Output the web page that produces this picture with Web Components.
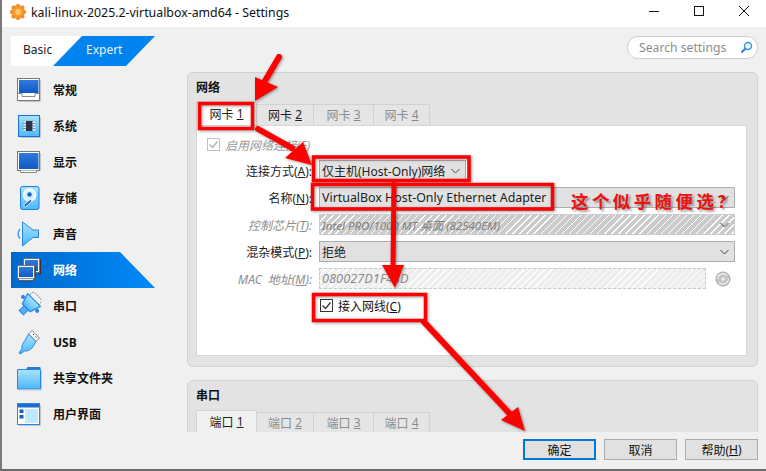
<!DOCTYPE html>
<html lang="zh">
<head>
<meta charset="utf-8">
<title>Settings</title>
<style>
    html, body { margin: 0; padding: 0; background: #f0f0f0; }
    body { font: 12px "Noto Sans", "Noto Sans CJK SC", sans-serif; color: #000; }
</style>
</head>
<body>
<vb-window>
    <vb-titlebar slot="title">kali-linux-2025.2-virtualbox-amd64 - Settings</vb-titlebar>
    <vb-sidebar slot="side">
        <vb-side-item icon="general">常规</vb-side-item>
        <vb-side-item icon="system">系统</vb-side-item>
        <vb-side-item icon="display">显示</vb-side-item>
        <vb-side-item icon="storage">存储</vb-side-item>
        <vb-side-item icon="audio">声音</vb-side-item>
        <vb-side-item icon="network" selected>网络</vb-side-item>
        <vb-side-item icon="serial">串口</vb-side-item>
        <vb-side-item icon="usb">USB</vb-side-item>
        <vb-side-item icon="folder">共享文件夹</vb-side-item>
        <vb-side-item icon="ui">用户界面</vb-side-item>
    </vb-sidebar>
    <vb-search slot="search">Search settings</vb-search>

    <vb-group title="网络">
        <vb-tabs>
            <vb-tab active>网卡 <u>1</u></vb-tab>
            <vb-tab>网卡 <u>2</u></vb-tab>
            <vb-tab disabled>网卡 <u>3</u></vb-tab>
            <vb-tab disabled>网卡 <u>4</u></vb-tab>
        </vb-tabs>
        <vb-pane>
            <vb-check disabled checked style="margin-left:10px">启用网络连接(E)</vb-check>
            <vb-row><span slot="label">连接方式(<u>A</u>):</span><vb-combo style="width:147px">仅主机(Host-Only)网络</vb-combo></vb-row>
            <vb-row><span slot="label">名称(<u>N</u>):</span><vb-combo style="width:416px;font-size:12.400px">VirtualBox Host-Only Ethernet Adapter</vb-combo></vb-row>
            <vb-row disabled><span slot="label">控制芯片(<u>T</u>):</span><vb-combo hatched style="width:416px;font-size:11.500px">Intel PRO/1000 MT 桌面 (82540EM)</vb-combo></vb-row>
            <vb-row><span slot="label">混杂模式(<u>P</u>):</span><vb-combo style="width:416px">拒绝</vb-combo></vb-row>
            <vb-row disabled><span slot="label" style="word-spacing:3px">MAC 地址(<u>M</u>):</span><vb-mac>080027D1F43D</vb-mac></vb-row>
            <vb-check checked style="margin-left:123px;height:21px">接入网线(<u>C</u>)</vb-check>
        </vb-pane>
    </vb-group>

    <vb-group title="串口" style="margin-top:13px">
        <vb-tabs>
            <vb-tab active soft>端口 <u>1</u></vb-tab>
            <vb-tab disabled>端口 <u>2</u></vb-tab>
            <vb-tab disabled>端口 <u>3</u></vb-tab>
            <vb-tab disabled>端口 <u>4</u></vb-tab>
        </vb-tabs>
    </vb-group>

    <vb-buttons slot="buttons">
        <vb-button default>确定</vb-button>
        <vb-button>取消</vb-button>
        <vb-button>帮助(<u>H</u>)</vb-button>
    </vb-buttons>

    <vb-annotations slot="overlay">这个似乎随便选？</vb-annotations>
</vb-window>

<script>
// one gradient set per svg, ids stay local to each shadow root
const DEFS = `<defs>
    <linearGradient id="sky" x1="0" y1="0" x2="0" y2="1"><stop offset="0" stop-color="#a8e4ff"/><stop offset="1" stop-color="#4cb8fb"/></linearGradient>
    <linearGradient id="deep" x1="0" y1="0" x2="0" y2="1"><stop offset="0" stop-color="#2f7ade"/><stop offset="1" stop-color="#0f5ac4"/></linearGradient>
</defs>`;

const ICONS = {
    general: `<rect x="3.500" y="2.500" width="22" height="22" fill="#fff" stroke="#777"/><rect x="5" y="4" width="19.500" height="13" fill="url(#deep)"/><path d="M4 17.500h4v3h13v-3h4" fill="none" stroke="#8a8a8a"/><path d="M26.500 4v21.500H5" fill="none" stroke="#c4c4c4"/>`,
    system: `<rect x="4.500" y="3.500" width="21" height="21" fill="url(#sky)" stroke="#1f6fd8"/><rect x="9" y="9" width="13" height="10" fill="#dff3ff" stroke="#6aa0d0" stroke-width=".6"/><rect x="12" y="9" width="6.500" height="10" fill="#2a3442"/><path d="M9 11.500h3M9 14h3M9 16.500h3M18.500 11.500h3M18.500 14h3M18.500 16.500h3" stroke="#3c78c0" stroke-width=".8"/><path d="M26.500 5v20.500H6" fill="none" stroke="#c4c4c4"/>`,
    display: `<rect x="3.500" y="3.500" width="22" height="19" fill="#fff" stroke="#777"/><rect x="5" y="5" width="19.500" height="16" fill="url(#deep)"/><path d="M6.500 22.500v2h16v-2" fill="#fff" stroke="#8a8a8a"/><path d="M26.500 5v18" stroke="#c4c4c4"/>`,
    storage: `<rect x="6.500" y="2.500" width="18.500" height="23" rx="2" fill="url(#sky)" stroke="#1f7be0"/><circle cx="15.500" cy="11" r="6" fill="#d8f1ff" stroke="#fff" stroke-width="1.500"/><circle cx="15.500" cy="10.500" r="2.200" fill="#1560c8"/><path d="M9.500 21l7-5.500 1.500 1.500-6.500 6z" fill="#1560c8" stroke="#fff" stroke-width=".8"/>`,
    audio: `<path d="M8.500 2L19 10h5.500v7.500H19L8.500 26z" fill="url(#sky)" stroke="#2a86e6" stroke-linejoin="round"/><path d="M6 9c-2.500 3-2.500 7 0 9.500" fill="none" stroke="#3f96ea" stroke-width="1.400"/>`,
    network: `<rect x="9.500" y="2.500" width="16" height="14" fill="#f4f4f4" stroke="#707070"/><rect x="11" y="4" width="13" height="11" fill="url(#deep)"/><path d="M26.500 4v14H24" fill="none" stroke="#333"/><rect x="3.500" y="9.500" width="17" height="13" fill="#f6f6f6" stroke="#707070"/><rect x="5" y="11" width="14" height="10" fill="url(#deep)"/><path d="M5 23.500h14" stroke="#eee" stroke-width="1.500"/><path d="M5 25h14M21.500 11v11" stroke="#444"/>`,
    serial: `<g transform="rotate(45 14 14)"><rect x="7.500" y="0" width="13" height="5.500" fill="#f6f6f6" stroke="#8a8a8a" stroke-dasharray="1.500 1"/><path d="M5 5.500h18l-3.500 11h-11z" fill="url(#sky)" stroke="#2a86e6" stroke-width="1.300"/><rect x="11" y="16.500" width="6" height="7" fill="#4cb0f5" stroke="#2a86e6"/><circle cx="4" cy="11" r="2" fill="#2a86e6"/><circle cx="24" cy="11" r="2" fill="#2a86e6"/></g>`,
    usb: `<path d="M18 2.500l7.500 7.500-3.500 3.500-7.500-7.500z" fill="#f6f6f6" stroke="#8a8a8a"/><path d="M14.500 6l7.500 7.500-3.500 6c-2 2.500-6 4-8 3.500l-4.500 3-1-1 3-4.500c-.5-2 1-6 3-8z" fill="url(#sky)" stroke="#2a86e6"/><path d="M19 6l1 1M21.500 8.500l1 1" stroke="#333"/>`,
    folder: `<path d="M12 5.500l1.500-2.500h12c.7 0 1 .3 1 1v3z" fill="#2a78d8"/><path d="M3.500 5.500h23v19.500h-23z" fill="url(#sky)" stroke="#2a86e6"/><path d="M27.500 7v19H5" fill="none" stroke="#c8c8c8"/>`,
    ui: `<rect x="3.500" y="3.500" width="22" height="21" fill="#fff" stroke="#2a86e6"/><rect x="4" y="4" width="21" height="3.500" fill="#1f6cd0"/><rect x="11" y="9" width="13" height="14" fill="#bfe9ff"/><rect x="5.500" y="9.500" width="4" height="3.500" fill="#1560c8"/><rect x="5.500" y="15" width="4" height="3.500" fill="#1560c8"/><path d="M26.500 5v20.500H5" fill="none" stroke="#c4c4c4"/>`
};

class VbWindow extends HTMLElement {
    constructor() {
        super();
        this.attachShadow({ mode: 'open' }).innerHTML = `
            <style>
                :host {
                    display: flex;
                    flex-direction: column;
                    position: relative;
                    width: 766px;
                    height: 471px;
                    box-sizing: border-box;
                    border-left: 2px solid #7a7a7a;
                    border-bottom: 2px solid #6a6a6a;
                    background: #f0f0f0;
                    overflow: hidden;
                }
                .main { display: flex; flex: 1; min-height: 0; padding-left: 9px; }
                .right { margin-left: 32px; width: 571px; padding-top: 9px; display: flex; flex-direction: column; }
                .search { display: flex; justify-content: flex-end; height: 23px; margin-bottom: 13px; }
                .scroll { height: 360px; overflow: hidden; }
            </style>
            <slot name="title"></slot>
            <div class="main">
                <slot name="side"></slot>
                <div class="right">
                    <div class="search"><slot name="search"></slot></div>
                    <div class="scroll"><slot></slot></div>
                    <slot name="buttons"></slot>
                </div>
            </div>
            <slot name="overlay"></slot>
        `;
    }
}

class VbTitlebar extends HTMLElement {
    constructor() {
        super();
        this.attachShadow({ mode: 'open' }).innerHTML = `
            <style>
                :host { display: flex; align-items: center; height: 27px; background: #fff; flex: none; font-size: 12.350px; color: #111; }
                .logo { margin-left: 8px; margin-right: 5px; margin-bottom: 3px; flex: none; }
                .text { flex: 1; white-space: nowrap; padding-bottom: 2px; }
                .ctl { width: 45px; height: 27px; display: flex; align-items: center; justify-content: center; flex: none; }
                .ctl svg { margin-bottom: 5px; }
            </style>
            <svg class="logo" width="16" height="16" viewBox="0 0 16 16">
                <g fill="#f58a1f" stroke="#d8691a" stroke-width=".5">
                    <circle cx="8" cy="2.200" r="2"/><circle cx="8" cy="13.800" r="2"/><circle cx="2.200" cy="8" r="2"/><circle cx="13.800" cy="8" r="2"/>
                    <circle cx="3.800" cy="3.800" r="2"/><circle cx="12.200" cy="3.800" r="2"/><circle cx="3.800" cy="12.200" r="2"/><circle cx="12.200" cy="12.200" r="2"/>
                </g>
                <circle cx="8" cy="8" r="6" fill="#f7982a"/>
                <circle cx="8" cy="8" r="3" fill="#fcc868"/>
            </svg>
            <span class="text"><slot></slot></span>
            <span class="ctl"><svg width="10" height="10" viewBox="0 0 10 10"><path d="M0 5.500h10" stroke="#111"/></svg></span>
            <span class="ctl"><svg width="10" height="10" viewBox="0 0 10 10"><rect x=".5" y=".5" width="9" height="9" fill="none" stroke="#111"/></svg></span>
            <span class="ctl"><svg width="10" height="10" viewBox="0 0 10 10"><path d="M0 0l10 10M10 0L0 10" stroke="#111"/></svg></span>
        `;
    }
}

class VbSidebar extends HTMLElement {
    constructor() {
        super();
        this.attachShadow({ mode: 'open' }).innerHTML = `
            <style>
                :host { display: block; width: 144px; flex: none; padding-top: 9px; }
                .mode { display: flex; height: 30px; margin-bottom: 6px; font-size: 12px; }
                .basic { width: 70px; background: #fff; padding-left: 12px; box-sizing: border-box; line-height: 28px; color: #222; }
                .expert {
                    width: 102px; margin-left: -28px; background: #0082ef; color: #e8f4ff;
                    clip-path: polygon(29px 0, 100% 0, 73px 100%, 0 100%);
                    padding-left: 33px; box-sizing: border-box; line-height: 28px;
                }
            </style>
            <div class="mode"><span class="basic">Basic</span><span class="expert">Expert</span></div>
            <slot></slot>
        `;
    }
}

class VbSideItem extends HTMLElement {
    constructor() {
        super();
        const icon = ICONS[this.getAttribute('icon')] || '';
        this.attachShadow({ mode: 'open' }).innerHTML = `
            <style>
                :host { display: flex; align-items: center; height: 36px; font-weight: 700; font-size: 12px; color: #111; padding-left: 3px; }
                :host([selected]) {
                    color: #fff;
                    background: linear-gradient(90deg, #0068cc, #008af8);
                    clip-path: polygon(0 0, 109px 0, 100% 100%, 0 100%);
                }
                svg { flex: none; margin-right: 11px; }
            </style>
            <svg width="28" height="28" viewBox="0 0 28 28">${DEFS}${icon}</svg>
            <slot></slot>
        `;
    }
}

class VbSearch extends HTMLElement {
    constructor() {
        super();
        this.attachShadow({ mode: 'open' }).innerHTML = `
            <style>
                :host {
                    display: flex; align-items: center; box-sizing: border-box; width: 131px; height: 23px;
                    background: #fff; border: 1px solid #cfcfcf; border-radius: 11px;
                    padding: 0 4px 1px 11px; color: #8d8d8d; font-size: 12.200px;
                }
                span { flex: 1; white-space: nowrap; }
            </style>
            <span><slot></slot></span>
            <svg width="13" height="13" viewBox="0 0 13 13"><circle cx="8" cy="5" r="3.500" fill="#eaf5ff" stroke="#3f95e8" stroke-width="1.500"/><path d="M5.500 7.500L1.500 11.500" stroke="#2f7fd8" stroke-width="2"/></svg>
        `;
    }
}

class VbGroup extends HTMLElement {
    constructor() {
        super();
        this.attachShadow({ mode: 'open' }).innerHTML = `
            <style>
                :host {
                    display: block; box-sizing: border-box; background: #e3e3e3;
                    border: 1px solid #d2d2d2; border-radius: 6px;
                    padding: 7px 10px 10px 8px;
                }
                .title { font-weight: 700; font-size: 12px; line-height: 16px; height: 17px; margin-bottom: 6px; color: #111; }
            </style>
            <div class="title">${this.getAttribute('title')}</div>
            <slot></slot>
        `;
    }
}

class VbTabs extends HTMLElement {
    constructor() {
        super();
        this.attachShadow({ mode: 'open' }).innerHTML = `
            <style>
                :host { display: flex; align-items: flex-end; height: 22px; }
            </style>
            <slot></slot>
        `;
    }
}

class VbTab extends HTMLElement {
    constructor() {
        super();
        this.attachShadow({ mode: 'open' }).innerHTML = `
            <style>
                :host {
                    display: flex; align-items: center; justify-content: center; box-sizing: border-box;
                    height: 21px; width: 57px; border: 1px solid #d2d2d2; border-bottom: 0; border-left: 0;
                    font-size: 12px; color: #222; background: #e5e5e5; white-space: pre; padding-bottom: 1px;
                }
                :host(:nth-child(n+3)) { width: 59px; }
                :host(:nth-child(3)) { width: 60px; }
                :host(:nth-child(4)) { width: 56px; }
                :host([active]) { height: 23px; width: 61px; background: #fff; border-left: 1px solid #d2d2d2; }
                :host([soft]) { background: #f0f0f0; }
                :host([disabled]) { color: #8c8c8c; }
            </style>
            <slot></slot>
        `;
    }
}

class VbPane extends HTMLElement {
    constructor() {
        super();
        this.attachShadow({ mode: 'open' }).innerHTML = `
            <style>
                :host {
                    display: flex; flex-direction: column; gap: 6px; box-sizing: border-box;
                    height: 231px; padding: 9px 10px 0 0; background: #fff; border: 1px solid #d6d6d6;
                }
            </style>
            <slot></slot>
        `;
    }
}

class VbRow extends HTMLElement {
    constructor() {
        super();
        this.attachShadow({ mode: 'open' }).innerHTML = `
            <style>
                :host { display: grid; grid-template-columns: 115px 1fr; column-gap: 7px; height: 21px; align-items: center; color: #222; font-size: 12px; }
                :host([disabled]) { color: #8c8c8c; font-style: italic; }
                .label { text-align: right; white-space: nowrap; }
                .field { display: flex; align-items: center; gap: 9px; }
            </style>
            <div class="label"><slot name="label"></slot></div>
            <div class="field"><slot></slot></div>
        `;
    }
}

class VbCombo extends HTMLElement {
    constructor() {
        super();
        this.attachShadow({ mode: 'open' }).innerHTML = `
            <style>
                :host {
                    display: flex; align-items: center; justify-content: space-between; box-sizing: border-box;
                    height: 21px; background: #e1e1e1; border: 1px solid #adadad; padding: 0 5px 0 2px;
                    white-space: nowrap; color: #222; font-size: 12px;
                }
                :host([hatched]) {
                    color: #808080; border-color: #cdcdcd;
                    background: repeating-linear-gradient(135deg, #cbcbcb 0 4px, #fff 4px 5px);
                }
                svg { flex: none; }
            </style>
            <span><slot></slot></span>
            <svg width="9" height="6" viewBox="0 0 9 6"><path d="M.5 1l4 4 4-4" fill="none" stroke="#444"/></svg>
        `;
    }
}

class VbMac extends HTMLElement {
    constructor() {
        super();
        this.attachShadow({ mode: 'open' }).innerHTML = `
            <style>
                :host { display: flex; align-items: center; gap: 9px; color: #8c8c8c; font-size: 12.800px; }
                .box {
                    box-sizing: border-box; width: 387px; height: 21px; padding: 0 2px; line-height: 18px;
                    border: 1px dashed #c8c8c8;
                    background: repeating-linear-gradient(135deg, #eeeeee 0 4px, #fff 4px 5px);
                }
            </style>
            <div class="box"><slot></slot></div>
            <svg width="16" height="16" viewBox="0 0 16 16">
                <circle cx="8" cy="8" r="7" fill="#c4c4c4" stroke="#a4a4a4"/>
                <path d="M2.500 8a5.500 5.500 0 0 1 9.500-3.500M13.500 8a5.500 5.500 0 0 1-9.500 3.500" fill="none" stroke="#eee" stroke-width="1.300"/>
                <circle cx="8" cy="8" r="1.800" fill="#eee"/>
            </svg>
        `;
    }
}

class VbCheck extends HTMLElement {
    constructor() {
        super();
        this.attachShadow({ mode: 'open' }).innerHTML = `
            <style>
                :host { display: flex; align-items: center; gap: 5px; height: 19px; color: #111; font-size: 12px; }
                :host([disabled]) { color: #9a9a9a; font-style: italic; }
                svg { flex: none; }
            </style>
            <svg width="13" height="13" viewBox="0 0 13 13">
                <rect x=".5" y=".5" width="12" height="12" fill="#fff" stroke="#333"/>
                <path d="M2.500 6.500l3 3 5-6" fill="none" stroke="#333" stroke-width="1.300"/>
            </svg>
            <span><slot></slot></span>
        `;
        if (this.hasAttribute('disabled')) {
            const svg = this.shadowRoot.querySelector('svg');
            svg.querySelector('rect').setAttribute('stroke', '#c0c0c0');
            svg.querySelector('path').setAttribute('stroke', '#b0b0b0');
        }
    }
}

class VbButtons extends HTMLElement {
    constructor() {
        super();
        this.attachShadow({ mode: 'open' }).innerHTML = `
            <style>
                :host { display: flex; justify-content: flex-end; gap: 8px; margin-top: 7px; }
            </style>
            <slot></slot>
        `;
    }
}

class VbButton extends HTMLElement {
    constructor() {
        super();
        this.attachShadow({ mode: 'open' }).innerHTML = `
            <style>
                :host {
                    display: flex; align-items: center; justify-content: center; box-sizing: border-box;
                    width: 73px; height: 21px; background: #e1e1e1; border: 1px solid #adadad;
                    font-size: 12px; color: #111; white-space: nowrap;
                }
                :host([default]) { border: 2px solid #0078d7; }
            </style>
            <slot></slot>
        `;
    }
}

// hand drawn red marks from the screenshot, they sit over everything
class VbAnnotations extends HTMLElement {
    constructor() {
        super();
        this.attachShadow({ mode: 'open' }).innerHTML = `
            <style>
                :host { position: absolute; left: -2px; top: 0; width: 766px; height: 471px; pointer-events: none; }
                svg { position: absolute; left: 0; top: 0; filter: drop-shadow(1.500px 1.500px 1.500px rgba(0,0,0,.4)); }
                .note {
                    position: absolute; left: 571px; top: 188px; white-space: nowrap;
                    font: 700 17.500px/26px "Noto Sans CJK SC", sans-serif; letter-spacing: 3.400px;
                    color: #f01010; text-shadow: 2px 2px 2px rgba(0,0,0,.35);
                }
            </style>
            <svg width="766" height="471" viewBox="0 0 766 471" fill="#f00" stroke="none">
                <g fill="none" stroke="#f00" stroke-width="3.500">
                    <rect x="199.500" y="103.500" width="53" height="25"/>
                    <rect x="313.500" y="157" width="155.500" height="23.500"/>
                    <rect x="312.500" y="184.500" width="240" height="24.500"/>
                    <rect x="313.500" y="294.500" width="112" height="26"/>
                </g>
                <g fill="none" stroke="#f00" stroke-linecap="round">
                    <path d="M279 57L262 86" stroke-width="6"/>
                    <path d="M258 129L292 148" stroke-width="6"/>
                    <path d="M394 183L393 268" stroke-width="5"/>
                    <path d="M424 322L510 414" stroke-width="6"/>
                </g>
                <path d="M255 77L278 87L255 101z"/>
                <path d="M285 158L303 142L312 165z"/>
                <path d="M382 265H404L395 288z"/>
                <path d="M501 420L518 407L525 431z"/>
            </svg>
            <div class="note"><slot></slot></div>
        `;
    }
}

customElements.define('vb-window', VbWindow);
customElements.define('vb-titlebar', VbTitlebar);
customElements.define('vb-sidebar', VbSidebar);
customElements.define('vb-side-item', VbSideItem);
customElements.define('vb-search', VbSearch);
customElements.define('vb-group', VbGroup);
customElements.define('vb-tabs', VbTabs);
customElements.define('vb-tab', VbTab);
customElements.define('vb-pane', VbPane);
customElements.define('vb-row', VbRow);
customElements.define('vb-combo', VbCombo);
customElements.define('vb-mac', VbMac);
customElements.define('vb-check', VbCheck);
customElements.define('vb-buttons', VbButtons);
customElements.define('vb-button', VbButton);
customElements.define('vb-annotations', VbAnnotations);
</script>
</body>
</html>
